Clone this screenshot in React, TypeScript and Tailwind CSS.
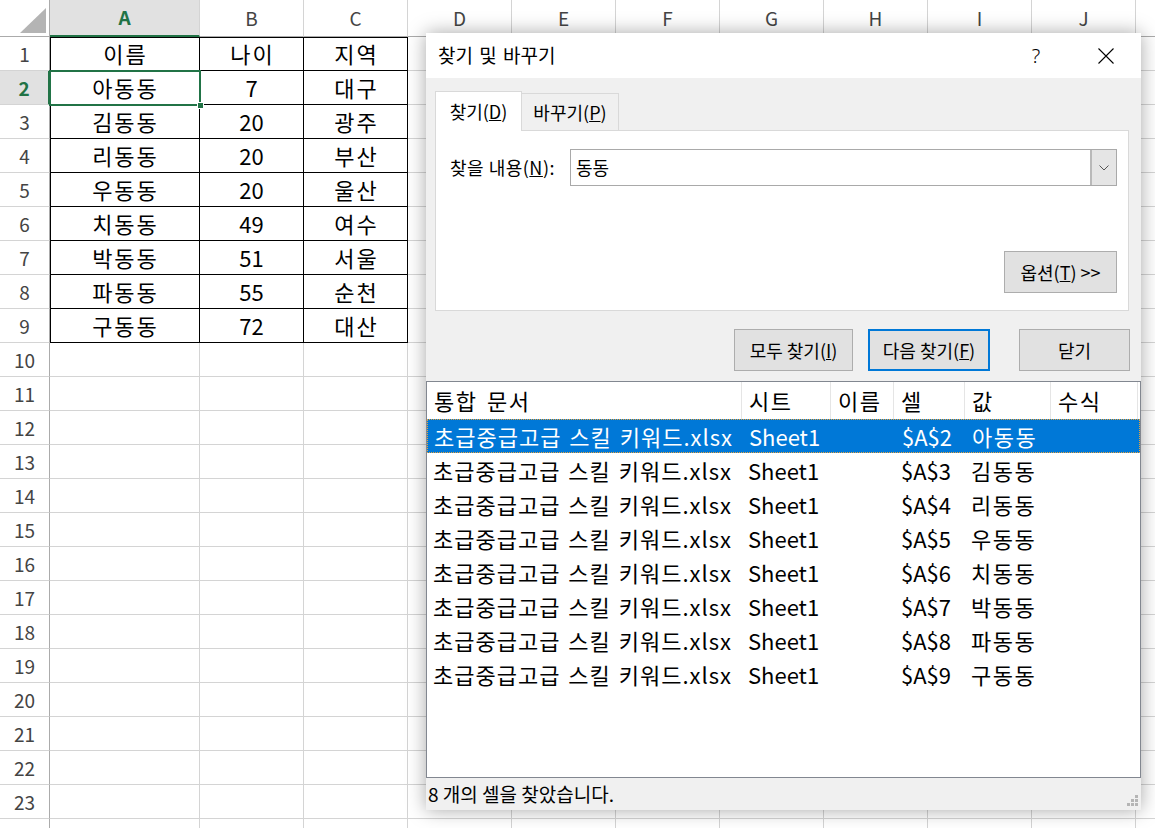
import React from 'react';

const FONT = "font-['Noto_Sans_CJK_KR','Noto_Sans',sans-serif]";

const colLetters = ['A', 'B', 'C', 'D', 'E', 'F', 'G', 'H', 'I', 'J', 'K'];

const data: string[][] = [
  ['이름', '나이', '지역'],
  ['아동동', '7', '대구'],
  ['김동동', '20', '광주'],
  ['리동동', '20', '부산'],
  ['우동동', '20', '울산'],
  ['치동동', '49', '여수'],
  ['박동동', '51', '서울'],
  ['파동동', '55', '순천'],
  ['구동동', '72', '대산'],
];

const results = [
  ['$A$2', '아동동'],
  ['$A$3', '김동동'],
  ['$A$4', '리동동'],
  ['$A$5', '우동동'],
  ['$A$6', '치동동'],
  ['$A$7', '박동동'],
  ['$A$8', '파동동'],
  ['$A$9', '구동동'],
];

function cellShadow(r: number, c: number): string {
  if (r === 1 && c === 0) return 'shadow-[inset_1px_1px_0_#000]';
  if (r === 1) return 'shadow-[inset_0_1px_0_#000]';
  if (c === 0) return 'shadow-[inset_1px_0_0_#000]';
  return '';
}

function Sheet() {
  const rows = Array.from({ length: 24 }, (_, i) => i + 1);
  return (
    <div className="grid grid-cols-[50px_150px_repeat(10,104px)] grid-rows-[37px_repeat(24,34px)]">
      {/* corner */}
      <div className="relative bg-white border-r border-b border-[#ababab]">
        <svg className="absolute left-0 top-0" width="49" height="36" viewBox="0 0 49 36">
          <polygon points="20,33 46,33 46,8" fill="#b4b4b4" />
        </svg>
      </div>
      {colLetters.map((l) => (
        <div
          key={l}
          className={
            l === 'A'
              ? 'flex items-center justify-center bg-[#e1e1e1] border-r border-r-[#d4d4d4] border-b-2 border-b-[#217346] text-[#217346] font-bold text-[19px]'
              : 'flex items-center justify-center bg-white border-r border-r-[#d4d4d4] border-b border-b-[#ababab] text-[#444] text-[19px]'
          }
        >
          {l === 'K' ? '' : l}
        </div>
      ))}
      {rows.map((r) => (
        <React.Fragment key={r}>
          <div
            className={
              r === 2
                ? 'flex items-center justify-center bg-[#e1e1e1] border-r-2 border-r-[#217346] border-b border-b-[#d4d4d4] text-[#217346] font-bold text-[19px] pt-[1px]'
                : 'flex items-center justify-center bg-white border-r border-r-[#ababab] border-b border-b-[#d4d4d4] text-[#444] text-[19px] pt-[1px]'
            }
          >
            {r <= 23 ? r : ''}
          </div>
          {colLetters.map((l, c) => {
            const inData = r <= 9 && c <= 2;
            const text = inData ? data[r - 1][c] : '';
            const isHangul = (inData && c !== 1) || (inData && r === 1);
            return (
              <div
                key={l}
                className={
                  'relative flex items-center justify-center text-[22px] text-black border-r border-b ' +
                  (isHangul ? 'tracking-[2px] pl-[2px] ' : '') +
                  (inData ? 'border-black ' + cellShadow(r, c) : 'border-[#d4d4d4]')
                }
              >
                {text}
                {r === 2 && c === 0 && (
                  <>
                    <div className="absolute left-[-1px] top-[-1px] right-[-2px] bottom-[-2px] border-2 border-[#217346] z-10" />
                    <div className="absolute right-[-5px] bottom-[-5px] w-[7px] h-[7px] bg-[#217346] border border-white z-20" />
                  </>
                )}
              </div>
            );
          })}
        </React.Fragment>
      ))}
    </div>
  );
}

function Btn({ children, className = '' }: { children: React.ReactNode; className?: string }) {
  return (
    <div
      className={
        'h-[42px] flex items-center justify-center bg-[#e1e1e1] text-[18px] text-black ' + className
      }
    >
      {children}
    </div>
  );
}

function Dialog() {
  return (
    <div className="absolute left-[426px] top-[33px] w-[715px] h-[777px] bg-[#f0f0f0] shadow-[0_0_18px_rgba(0,0,0,0.35)] flex flex-col z-30">
      {/* title bar */}
      <div className="h-[45px] bg-white flex items-center pl-[12px] text-black">
        <span className="text-[19px] [word-spacing:2px]">찾기 및 바꾸기</span>
        <div className="ml-auto flex h-full">
          <div className="w-[70px] flex items-center justify-center text-[20px] font-light font-['Noto_Sans',sans-serif]">?</div>
          <div className="w-[70px] flex items-center justify-center">
            <svg width="16" height="16" viewBox="0 0 16 16">
              <path d="M0.5 0.5 L15.5 15.5 M15.5 0.5 L0.5 15.5" stroke="#000" strokeWidth="1.1" />
            </svg>
          </div>
        </div>
      </div>

      {/* tabs + panel */}
      <div className="mt-[13px] ml-[9px] mr-[12px]">
        <div className="flex items-end h-[40px] relative z-10">
          <div className="h-[40px] w-[87px] bg-white border border-b-0 border-[#d9d9d9] flex items-center justify-center text-[18px]">
            <span>
              찾기(<span className="underline">D</span>)
            </span>
          </div>
          <div className="h-[38px] w-[97px] bg-[#f0f0f0] border border-l-0 border-[#d9d9d9] flex items-center justify-center text-[18px]">
            <span>
              바꾸기(<span className="underline">P</span>)
            </span>
          </div>
        </div>
        <div className="h-[181px] -mt-[1px] bg-white border border-[#d9d9d9] flex flex-col pt-[18px] pl-[14px] pr-[11px] pb-[17px]">
          <div className="flex items-center">
            <div className="w-[120px] text-[18px] tracking-[0.5px]">
              찾을 내용(<span className="underline">N</span>):
            </div>
            <div className="flex-1 h-[37px] flex border border-[#a9a9a9] bg-white">
              <div className="flex-1 flex items-center pl-[5px] text-[18px]">동동</div>
              <div className="w-[26px] bg-[#e5e5e5] border-l-2 border-[#b9b9b9] flex items-center justify-center">
                <svg width="10" height="6" viewBox="0 0 10 6">
                  <path d="M0.5 0.5 L5 5 L9.5 0.5" stroke="#555" strokeWidth="1" fill="none" />
                </svg>
              </div>
            </div>
          </div>
          <div className="mt-auto flex justify-end">
            <Btn className="w-[113px] border border-[#adadad]">
              <span>
                옵션(<span className="underline">T</span>) &gt;&gt;
              </span>
            </Btn>
          </div>
        </div>
      </div>

      {/* buttons row */}
      <div className="mt-[18px] flex justify-end pr-[11px]">
        <Btn className="w-[119px] border border-[#adadad]">
          <span>
            모두 찾기(<span className="underline">I</span>)
          </span>
        </Btn>
        <Btn className="w-[122px] ml-[15px] border-2 border-[#0078d7]">
          <span>
            다음 찾기(<span className="underline">F</span>)
          </span>
        </Btn>
        <Btn className="w-[111px] ml-[29px] border border-[#adadad]">닫기</Btn>
      </div>

      {/* results list */}
      <div className="mt-[10px] h-[397px] bg-white border border-[#828790] flex flex-col text-[22px] text-black">
        <div className="h-[37px] grid grid-cols-[315px_89px_63px_71px_86px_87px]">
          {['통합 문서', '시트', '이름', '셀', '값', '수식'].map((h) => (
            <div
              key={h}
              className="flex items-center pl-[7px] border-r border-[#e5e5e5] whitespace-nowrap tracking-[1.5px] [word-spacing:3px]"
            >
              {h}
            </div>
          ))}
        </div>
        {results.map(([cell, val], i) => (
          <div
            key={cell}
            className={
              'h-[34px] grid grid-cols-[315px_89px_63px_71px_86px_87px] whitespace-nowrap ' +
              (i === 0 ? 'bg-[#0078d7] text-white border border-dotted border-[#e8a33d]' : '')
            }
          >
            <div className="flex items-center pl-[6px] overflow-hidden tracking-[1px] [word-spacing:2px]">
              초급중급고급 스킬 키워드.xlsx
            </div>
            <div className="flex items-center pl-[6px]">Sheet1</div>
            <div className="flex items-center pl-[6px]"></div>
            <div className="flex items-center pl-[7px]">{cell}</div>
            <div className="flex items-center pl-[6px] tracking-[1.5px]">{val}</div>
            <div className="flex items-center pl-[6px]"></div>
          </div>
        ))}
      </div>

      {/* status */}
      <div className="flex-1 relative flex items-center pl-[2px] text-[19px] text-black">
        8 개의 셀을 찾았습니다.
        <svg className="absolute right-[2px] bottom-[3px]" width="12" height="12" viewBox="0 0 12 12">
          <rect x="8" y="0" width="3" height="3" fill="#b5b5b5" />
          <rect x="4" y="4" width="3" height="3" fill="#b5b5b5" />
          <rect x="8" y="4" width="3" height="3" fill="#b5b5b5" />
          <rect x="0" y="8" width="3" height="3" fill="#b5b5b5" />
          <rect x="4" y="8" width="3" height="3" fill="#b5b5b5" />
          <rect x="8" y="8" width="3" height="3" fill="#b5b5b5" />
        </svg>
      </div>
    </div>
  );
}

export default function App() {
  return (
    <div className={'relative w-[1155px] h-[828px] overflow-hidden bg-white ' + FONT}>
      <Sheet />
      <Dialog />
    </div>
  );
}
